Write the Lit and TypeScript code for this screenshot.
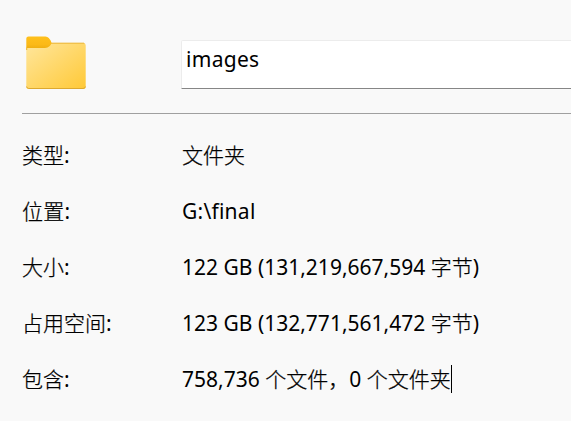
import { LitElement, html, css } from "lit";
import { customElement, property } from "lit/decorators.js";

@customElement("folder-icon")
class FolderIcon extends LitElement {
  static styles = css`
    :host { display: block; width: 60px; height: 54px; }
    svg { display: block; }
  `;
  render() {
    return html`<svg width="60" height="54" viewBox="0 0 60 54">
      <defs>
        <linearGradient id="front" x1="0" y1="0" x2="1" y2="1">
          <stop offset="0" stop-color="#ffe69c" />
          <stop offset="1" stop-color="#ffc937" />
        </linearGradient>
        <linearGradient id="tab" x1="0" y1="0" x2="0" y2="1">
          <stop offset="0" stop-color="#ffc01c" />
          <stop offset="0.6" stop-color="#fbb917" />
          <stop offset="1" stop-color="#e9a90f" />
        </linearGradient>
      </defs>
      <path d="M22 6H58V12H22Z" fill="#f5e3b6" />
      <path d="M0.3 11H16L24 7.2H57.8Q59.7 7.2 59.7 9.2V50.8Q59.7 53 57.5 53H2.5Q0.3 53 0.3 50.8Z" fill="url(#front)" />
      <path d="M25 7.5H58.5" stroke="#efbd45" stroke-width="0.9" />
      <path d="M0.3 14V2.5Q0.3 0.4 2.5 0.4H19.5Q21.5 0.4 22.8 2L24.8 4.8Q26.4 7.2 24.6 9L23.4 10.2Q21.7 11.9 19 11.9H1.2V14Z" fill="url(#tab)" />
      <path d="M0.6 50.5Q0.8 52.5 2.8 52.5H57Q59.2 52.5 59.4 50.5" fill="none" stroke="#dda92f" stroke-width="1" />
    </svg>`;
  }
}

const splitRuns = (text: string) => text.match(/[\u3000-\uffef]+|[^\u3000-\uffef]+/g) ?? [];
const isHan = (run: string) => /^[\u3000-\uffef]/.test(run);

@customElement("property-row")
class PropertyRow extends LitElement {
  @property() label = "";
  @property() value = "";
  @property({ type: Boolean }) caret = false;
  static styles = css`
    :host { display: grid; grid-template-columns: 160px 1fr; height: 56px; line-height: 28px; white-space: pre; }
    .value { display: flex; align-items: flex-start; }
    .han {
      font-family: "Noto Sans CJK SC Light", "Noto Sans CJK SC", sans-serif; font-weight: 300; line-height: 1;
      -webkit-text-stroke: 0.25px #000;
    }
    .caret { width: 1px; height: 28px; background: #000; }
  `;
  private text(text: string) {
    return splitRuns(text).map((run) => (isHan(run) ? html`<span class="han">${run}</span>` : run));
  }
  render() {
    return html`<span class="label">${this.text(this.label)}</span
      ><span class="value"><span>${this.text(this.value)}</span>${this.caret ? html`<i class="caret"></i>` : ""}</span>`;
  }
}

@customElement("app-root")
class AppRoot extends LitElement {
  static styles = css`
    :host {
      display: block; box-sizing: border-box; height: 421px; padding: 36px 0 0 22px; overflow: hidden;
      background: #f9f9f9; color: #000;
      font: 21px "Noto Sans", "Noto Sans CJK SC", sans-serif;
    }
    .header { display: flex; height: 77px; border-bottom: 1px solid #a0a0a0; }
    folder-icon { margin-left: 4px; }
    .name {
      box-sizing: border-box; margin: 4px 0 0 95px; width: 400px; height: 49px; padding-left: 4px; flex: none;
      background: #fff; border: 1px solid #ececec; border-bottom-color: #868686; border-radius: 2px 0 0 1px;
      line-height: 36px; letter-spacing: 0.3px;
    }
    .rows { padding-top: 27px; }
    .path { letter-spacing: 0.25px; }
  `;
  render() {
    return html`
      <div class="header"><folder-icon></folder-icon><div class="name">images</div></div>
      <div class="rows">
        <property-row label="类型:" value="文件夹"></property-row>
        <property-row class="path" label="位置:" value="G:\\final"></property-row>
        <property-row label="大小:" value="122 GB (131,219,667,594 字节)"></property-row>
        <property-row label="占用空间:" value="123 GB (132,771,561,472 字节)"></property-row>
        <property-row label="包含:" value="758,736 个文件，0 个文件夹" caret></property-row>
      </div>`;
  }
}
